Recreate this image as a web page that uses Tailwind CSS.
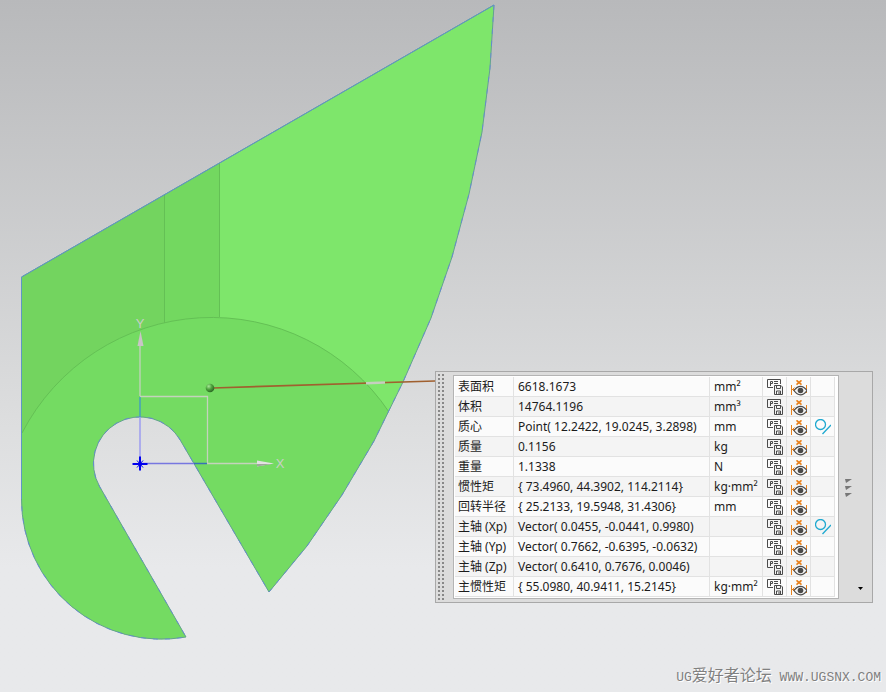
<!DOCTYPE html>
<html lang="zh-CN">
    <head>
        <meta charset="UTF-8" />
        <meta name="viewport" content="width=device-width, initial-scale=1.0" />
        <title>测量体</title>
        <script src="https://cdn.jsdelivr.net/npm/@tailwindcss/browser@4"></script>
    </head>
    <body>
        <!-- shared icons -->
        <svg class="hidden">
            <symbol id="icon-save" viewBox="0 0 16 16">
                <path d="M6 8.5H.5v-8h13V5" fill="none" stroke="#4a4a4a" />
                <path d="M3.5 7V2.500H5.500V4.500H3.500M7 2.500h4M7 4.500h4" fill="none" stroke="#4a4a4a" />
                <path d="M7.500 6.500h6.500l1.500 1.500v7.500h-8z" fill="#f4f4f4" stroke="#4a4a4a" />
                <path d="M9.500 7v2.500h4V7M9.500 15.500v-3.500h4v3.500" fill="none" stroke="#4a4a4a" />
                <path d="M11 13h2v2h-2z" fill="#999" />
            </symbol>
            <symbol id="icon-eye" viewBox="0 0 16 16">
                <path d="M.5 5v10M15.500 5v8M1 9.500h4M3.500 7.500 1.500 9.500l2 2" fill="none" stroke="#e8821e" />
                <path d="m5.500.3 5 4.400m0-4.400-5 4.400" stroke="#e8821e" stroke-width="1.600" />
                <path d="M3 10.500Q6 6.300 9.500 6.300T16 10.500Q13 14.800 9.500 14.800T3 10.500z" fill="#f4f4f4" stroke="#4a4a4a" stroke-width="1.200" />
                <circle cx="9.500" cy="10.500" r="2.800" fill="#4a4a4a" />
            </symbol>
            <symbol id="icon-geometry" viewBox="0 0 16 16">
                <circle cx="5.500" cy="5.500" r="5" fill="none" stroke="#1fa9d0" stroke-width="1.300" />
                <path d="m7.500 15 8.500-9" stroke="#1fa9d0" stroke-width="1.300" />
            </symbol>
        </svg>

        <main
            class="relative w-full min-h-screen overflow-hidden bg-linear-to-b from-[#b8b9bb] via-[#dcddde] via-60% to-[#e8e9eb] to-82%"
        >
            <svg class="block" width="886" height="692" viewBox="0 0 886 692">
                <defs>
                    <radialGradient id="ball" cx="35%" cy="30%" r="70%">
                        <stop offset="0" stop-color="#a8e898" />
                        <stop offset="0.5" stop-color="#4fa63f" />
                        <stop offset="1" stop-color="#2c6a24" />
                    </radialGradient>
                    <path
                        id="outline"
                        d="M21.500 277 494 5 490 68 482 132 469 194 452 257 431 318 403 382 374 441 342 495 307 546 269 592 180.300 440.200A46.500 46.500 0 1 0 99.700 486.700L186 637A140 140 0 0 1 21.500 499z"
                    />
                    <clipPath id="body"><use href="#outline" /></clipPath>
                </defs>
                <g clip-path="url(#body)">
                    <path d="M0 0h165v692H0z" fill="#73d45f" />
                    <path d="M164 0h56v692h-56z" fill="#73d860" />
                    <path d="M219 0h300v692H219z" fill="#7ee66b" />
                    <path d="M0 499 22 433A213.500 213.500 0 0 1 389 412L389 692H0z" fill="#74db62" />
                    <path d="M22 433A213.500 213.500 0 0 1 389 412M164.500 190v133M219.500 160v157" fill="none" stroke="#64c055" />
                </g>
                <use href="#outline" fill="none" stroke="#64a28f" />
                <path d="M21.500 499V277L494 5" fill="none" stroke="#5f96c4" />
                <path
                    d="M494 5 490 68 482 132 469 194 452 257 431 318 403 382 374 441 342 495 307 546 269 592 180.300 440.200A46.500 46.500 0 1 0 99.700 486.700L186 637A140 140 0 0 1 21.500 499"
                    fill="none"
                    stroke="#6480e6"
                    stroke-dasharray="5 7"
                    stroke-width="0.700"
                />

                <!-- leader line -->
                <path d="M213 388 435 381" stroke="#a0602f" stroke-width="1.700" />
                <path d="M366 383.200 385 382.500" stroke="#c6cfc0" stroke-width="2.500" />
                <circle cx="210" cy="388" r="4.300" fill="url(#ball)" />

                <!-- coordinate system -->
                <path d="M140 396V345M140 396.500h67.500V463M207 463.500h52" fill="none" stroke="#c4d2bd" stroke-width="1.300" />
                <path d="M140 417V397" stroke="#459fbe" stroke-width="1.500" />
                <path d="M140 463V417" stroke="#9c9cf0" stroke-width="1.500" />
                <path d="M140 463.500h55" stroke="#7777e0" stroke-width="1.300" />
                <path d="M194 463.500h13" stroke="#3871b8" stroke-width="1.500" />
                <path d="m140.500 331 3 15h-6z" fill="#c9c4c6" />
                <path d="m274 463.500-17-3v6z" fill="#e2e2e2" />
                <path d="M257 464h15l-15 2.500z" fill="#9ea79b" />
                <path d="M132.500 464h15M140 456.500v14" stroke="#0000ee" stroke-width="2" />
                <path d="m137 460.500 6 7m0-7-6 7" stroke="#0000ee" />
                <text x="140" y="328" text-anchor="middle" font-family="Liberation Sans, sans-serif" font-size="13" fill="#c9cfc7">Y</text>
                <text x="280" y="468" text-anchor="middle" font-family="Liberation Sans, sans-serif" font-size="13" fill="#c9cfc7">X</text>
            </svg>

            <section
                class="absolute left-[435px] top-[371px] flex border border-[#a8a8a8] bg-[#dcdcdc] font-['Noto_Sans','Noto_Sans_CJK_SC',sans-serif] text-xs text-[#1c1c1c]"
            >
                <div
                    class="my-0.5 ml-0.5 w-2 bg-[conic-gradient(#888_25%,transparent_0)] bg-size-[4px_4px] bg-position-[-2px_0]"
                ></div>
                <div class="my-[3px] ml-[7px] border border-[#b4b4b4] bg-white p-px pr-[3px]">
                    <table class="border-separate border-spacing-0">
                        <tbody id="measureBody"></tbody>
                    </table>
                </div>
                <div class="flex w-[33px] flex-col justify-between items-end">
                    <svg class="mt-[107px] mr-5" width="7" height="18" viewBox="0 0 7 18">
                        <path d="M0 0h7L1 4zM0 7h7l-6 4zM0 14h7l-6 4z" fill="#777" />
                    </svg>
                    <button class="mr-[9px] mb-3" aria-label="更多">
                        <svg class="block" width="5" height="3" viewBox="0 0 5 3">
                            <path d="M0 0h5L2.500 3z" fill="#000" />
                        </svg>
                    </button>
                </div>
            </section>

            <p
                class="absolute right-[5px] bottom-0.5 text-[13px] leading-6 whitespace-pre text-[#808080] [text-shadow:1px_1px_0_#fff] font-['Liberation_Mono','Noto_Sans_CJK_SC',monospace]"
            >UG<span class="text-base leading-6">爱好者论坛</span> WWW.UGSNX.COM</p>
        </main>
        <script>
            const measureBody = document.getElementById("measureBody");

            const MEASURES = [
                { name: "表面积", value: "6618.1673", unit: "mm²" },
                { name: "体积", value: "14764.1196", unit: "mm³" },
                { name: "质心", value: "Point( 12.2422, 19.0245, 3.2898)", unit: "mm", geometry: true },
                { name: "质量", value: "0.1156", unit: "kg" },
                { name: "重量", value: "1.1338", unit: "N" },
                { name: "惯性矩", value: "{ 73.4960, 44.3902, 114.2114}", unit: "kg·mm²" },
                { name: "回转半径", value: "{ 25.2133, 19.5948, 31.4306}", unit: "mm" },
                { name: "主轴 (Xp)", value: "Vector( 0.0455, -0.0441, 0.9980)", unit: "", geometry: true },
                { name: "主轴 (Yp)", value: "Vector( 0.7662, -0.6395, -0.0632)", unit: "" },
                { name: "主轴 (Zp)", value: "Vector( 0.6410, 0.7676, 0.0046)", unit: "" },
                { name: "主惯性矩", value: "{ 55.0980, 40.9411, 15.2145}", unit: "kg·mm²" },
            ];

            function iconButton(icon, label) {
                return `<button class="mx-auto block" aria-label="${label}">
                    <svg class="block size-4"><use href="#${icon}" /></svg>
                </button>`;
            }

            measureBody.innerHTML = MEASURES.map(
                (m) => `<tr class="h-5 bg-[#fbfbfb] even:bg-[#f4f4f4] whitespace-nowrap">
                    <th class="w-[59px] border-r border-b border-[#e2e2e2] p-0 pl-[3px] text-left font-normal leading-[19px]">${m.name}</th>
                    <td class="w-[196px] border-r border-b border-[#e2e2e2] p-0 pl-1 leading-[19px]">${m.value}</td>
                    <td class="w-[53px] border-r border-b border-[#e2e2e2] p-0 pl-1 leading-[19px]">${m.unit}</td>
                    <td class="w-6 border-r border-b border-[#e2e2e2] p-0">${iconButton("icon-save", "保存")}</td>
                    <td class="w-6 border-r border-b border-[#e2e2e2] p-0 pt-0.5">${iconButton("icon-eye", "显示")}</td>
                    <td class="w-6 border-r border-b border-[#e2e2e2] p-0">${m.geometry ? iconButton("icon-geometry", "创建几何体") : ""}</td>
                </tr>`
            ).join("");
        </script>
    </body>
</html>
